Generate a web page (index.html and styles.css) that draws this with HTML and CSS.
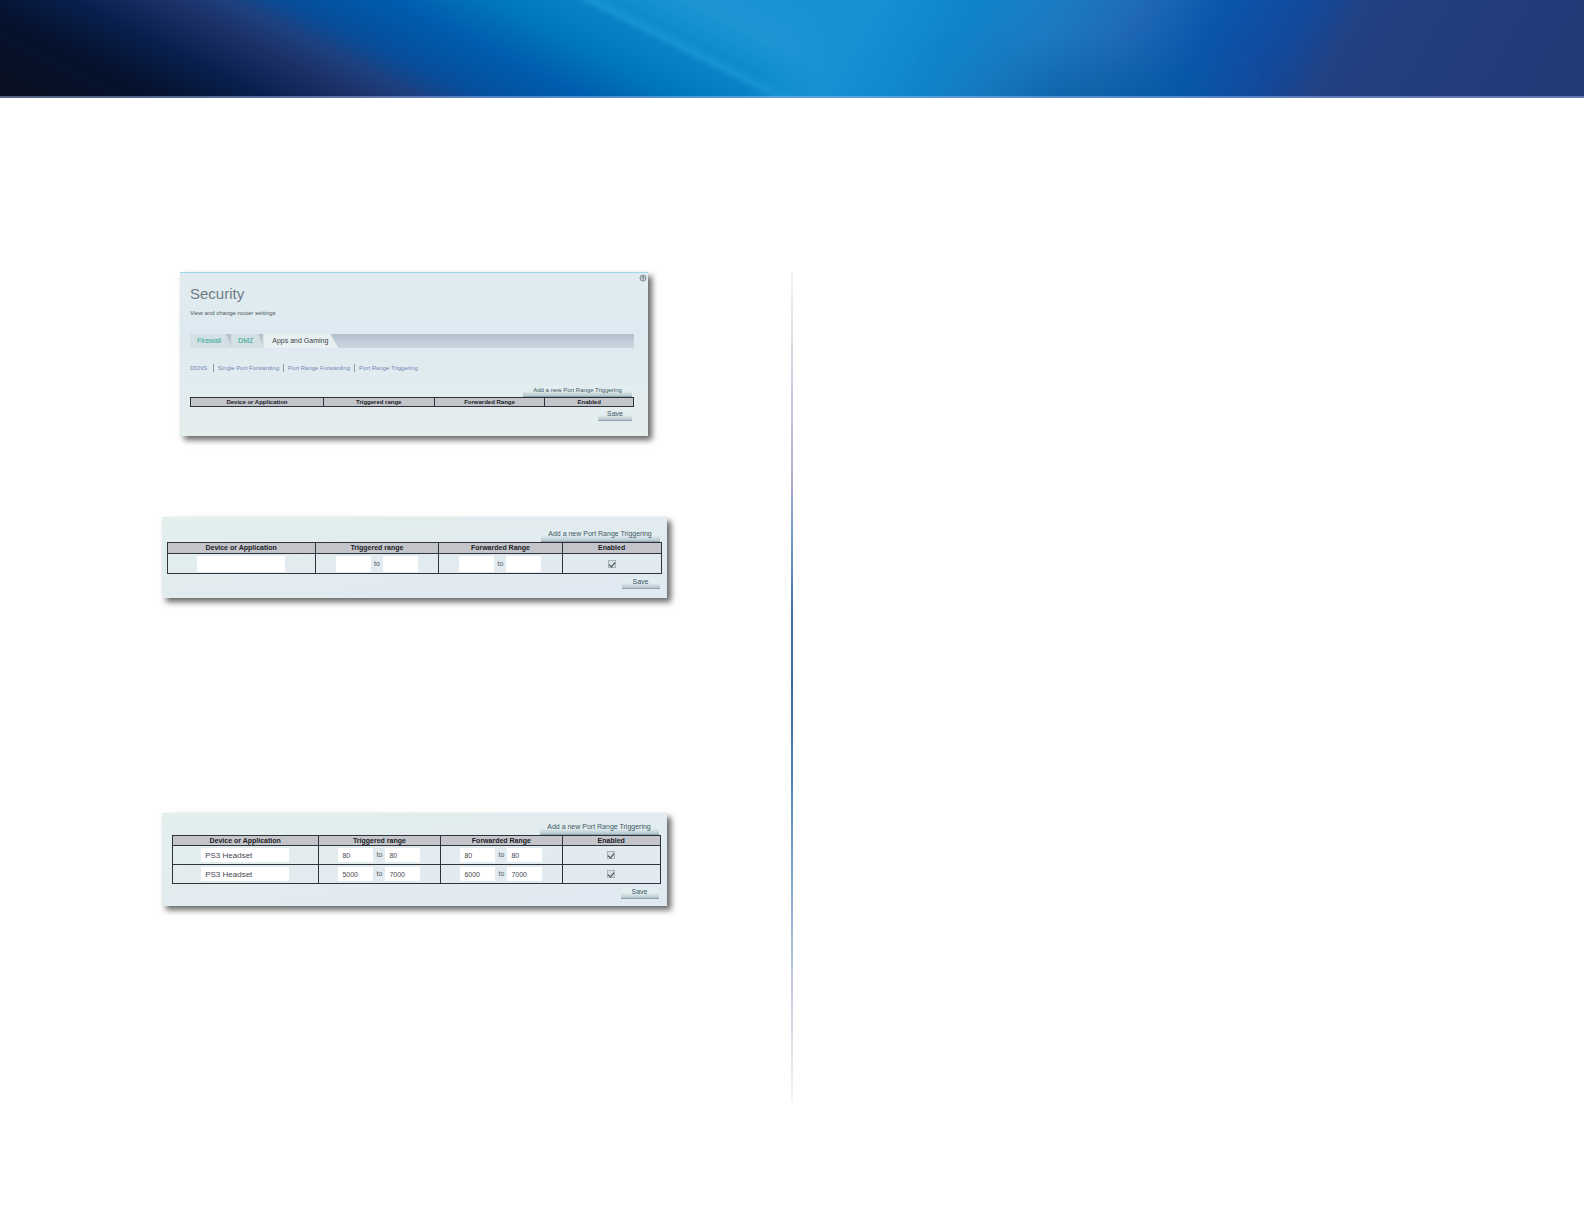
FILE: index.html
```html
<!DOCTYPE html>
<html lang="en">
<head>
  <meta charset="UTF-8">
  <meta name="viewport" content="width=device-width, initial-scale=1.0">
  <title>Port Range Triggering</title>
  <link rel="stylesheet" href="styles.css">
</head>
<body>
  <header class="banner">
    <svg viewBox="0 0 1584 98" preserveAspectRatio="none" aria-hidden="true">
      <defs>
        <linearGradient id="left" gradientUnits="userSpaceOnUse" x1="-190" y1="0" x2="810" y2="0" gradientTransform="skewX(63)">
          <stop offset="0" stop-color="#0a0f20"/>
          <stop offset=".16" stop-color="#05122e"/>
          <stop offset=".26" stop-color="#081f4c"/>
          <stop offset=".36" stop-color="#1d3168"/>
          <stop offset=".42" stop-color="#1c4180"/>
          <stop offset=".48" stop-color="#064e9c"/>
          <stop offset=".58" stop-color="#005cae"/>
          <stop offset=".68" stop-color="#0076be"/>
          <stop offset=".765" stop-color="#0a82c8"/>
          <stop offset=".78" stop-color="#1793d2"/>
          <stop offset=".80" stop-color="#0c8ccc"/>
          <stop offset=".88" stop-color="#1f95d5"/>
          <stop offset="1" stop-color="#1890d4"/>
        </linearGradient>
        <linearGradient id="right" gradientUnits="userSpaceOnUse" x1="800" y1="0" x2="1584" y2="0" gradientTransform="skewX(-30)">
          <stop offset="0" stop-color="#1890d4" stop-opacity="0"/>
          <stop offset=".1" stop-color="#1890d4"/>
          <stop offset=".22" stop-color="#0f84cb"/>
          <stop offset=".34" stop-color="#1c7ac2"/>
          <stop offset=".44" stop-color="#1f69b6"/>
          <stop offset=".55" stop-color="#0a55ac"/>
          <stop offset=".65" stop-color="#12499c"/>
          <stop offset=".73" stop-color="#224182"/>
          <stop offset="1" stop-color="#233978"/>
        </linearGradient>
        <linearGradient id="shade" x1="0" y1="0" x2="0" y2="1">
          <stop offset=".3" stop-color="#005c9c" stop-opacity="0"/>
          <stop offset="1" stop-color="#005c9c" stop-opacity=".7"/>
        </linearGradient>
        <filter id="soft" x="-50%" y="-60%" width="200%" height="220%">
          <feGaussianBlur stdDeviation="40 8"/>
        </filter>
      </defs>
      <rect width="1584" height="98" fill="url(#left)"/>
      <rect x="700" width="884" height="98" fill="url(#right)"/>
      <rect x="1000" width="200" height="120" fill="url(#shade)" filter="url(#soft)"/>
      <rect y="96" width="1584" height="2" fill="#a0b8e8" opacity=".5"/>
    </svg>
  </header>

  <main class="page">
    <div class="column">
      <section class="panel security">
        <svg class="help" viewBox="0 0 8 8" aria-hidden="true">
          <circle cx="4" cy="4" r="3" fill="#c5ced4" stroke="#7f8a92"/>
          <path d="M3 3.2Q4 2.2 5 3.1Q5 3.8 4 4.2V5.4" fill="none" stroke="#5e6a74" stroke-width=".8"/>
        </svg>
        <h1>Security</h1>
        <p>View and change router settings</p>
        <nav class="tabs">
          <a href="#firewall">Firewall</a>
          <a href="#dmz">DMZ</a>
          <a href="#apps" class="active">Apps and Gaming</a>
        </nav>
        <nav class="links">
          <a href="#ddns">DDNS</a>
          <a href="#single">Single Port Forwarding</a>
          <a href="#range">Port Range Forwarding</a>
          <a href="#trigger">Port Range Triggering</a>
        </nav>
        <button class="btn add">Add a new Port Range Triggering</button>
        <table>
          <thead>
            <tr><th class="device">Device or Application</th><th class="range">Triggered range</th><th class="range">Forwarded Range</th><th>Enabled</th></tr>
          </thead>
        </table>
        <button class="btn save">Save</button>
      </section>

      <section class="panel entry">
        <button class="btn add">Add a new Port Range Triggering</button>
        <table>
          <thead>
            <tr><th class="device">Device or Application</th><th class="range">Triggered range</th><th class="range">Forwarded Range</th><th>Enabled</th></tr>
          </thead>
          <tbody>
            <tr>
              <td><input type="text" class="name" aria-label="Device or Application"></td>
              <td><div class="ports"><input type="text" aria-label="Triggered from"><span>to</span><input type="text" aria-label="Triggered to"></div></td>
              <td><div class="ports"><input type="text" aria-label="Forwarded from"><span>to</span><input type="text" aria-label="Forwarded to"></div></td>
              <td><input type="checkbox" aria-label="Enabled" checked></td>
            </tr>
          </tbody>
        </table>
        <button class="btn save">Save</button>
      </section>

      <section class="panel filled">
        <button class="btn add">Add a new Port Range Triggering</button>
        <table>
          <thead>
            <tr><th class="device">Device or Application</th><th class="range">Triggered range</th><th class="range">Forwarded Range</th><th>Enabled</th></tr>
          </thead>
          <tbody>
            <tr>
              <td><input type="text" class="name" aria-label="Device or Application" value="PS3 Headset"></td>
              <td><div class="ports"><input type="text" aria-label="Triggered from" value="80"><span>to</span><input type="text" aria-label="Triggered to" value="80"></div></td>
              <td><div class="ports"><input type="text" aria-label="Forwarded from" value="80"><span>to</span><input type="text" aria-label="Forwarded to" value="80"></div></td>
              <td><input type="checkbox" aria-label="Enabled" checked></td>
            </tr>
            <tr>
              <td><input type="text" class="name" aria-label="Device or Application" value="PS3 Headset"></td>
              <td><div class="ports"><input type="text" aria-label="Triggered from" value="5000"><span>to</span><input type="text" aria-label="Triggered to" value="7000"></div></td>
              <td><div class="ports"><input type="text" aria-label="Forwarded from" value="6000"><span>to</span><input type="text" aria-label="Forwarded to" value="7000"></div></td>
              <td><input type="checkbox" aria-label="Enabled" checked></td>
            </tr>
          </tbody>
        </table>
        <button class="btn save">Save</button>
      </section>
    </div>
    <div class="divider"></div>
    <div class="column"></div>
  </main>
</body>
</html>
```
FILE: styles.css
```css
* {
  box-sizing: border-box;
}
body {
  margin: 0;
  background: #fff;
  color: #50565c;
  font-family: "Liberation Sans", Arial, sans-serif;
  font-size: 7px;
  line-height: 8px;
}
.banner svg {
  display: block;
  width: 100%;
  height: 98px;
}
.page {
  display: grid;
  grid-template-columns: 1fr 2px 1fr;
  column-gap: 71px;
  padding: 174px 108px 120px;
}
.column {
  display: flex;
  flex-direction: column;
  align-items: center;
}
.divider {
  min-height: 830px;
  background: linear-gradient(#f4f4f6, #d8d6e4 10%, #b9acd0 24%, #7f9fc8 30%, #3f6fae 42%, #3a6aa6 50%, #5585b8 62%, #95b4d4 78%, #d0cfe2 88%, #f4f4f6);
}

/* panels */
.panel {
  position: relative;
  display: flex;
  flex-direction: column;
  width: 100%;
  max-width: 505px;
  background: linear-gradient(170deg, #e3efed, #e2ebf0 60%, #e0e9f2);
  box-shadow: 4px 4px 6px rgba(0, 0, 0, 0.6);
}
.security {
  max-width: 468px;
  padding: 13px 14px 15px 10px;
  border-top: 1px solid #9fd6ee;
  background: linear-gradient(#e1ecf0, #deeaf1 35%, #e5eeee);
}
.entry {
  margin-top: 81px;
  padding: 13px 5px 9px;
}
.filled {
  margin-top: 215px;
  padding: 10px 6px 7px 10px;
}
.help {
  position: absolute;
  top: 1px;
  right: 1px;
  width: 8px;
  height: 8px;
}
h1 {
  margin: 0;
  color: #6e7a84;
  font-size: 15px;
  font-weight: normal;
  line-height: 16px;
}
p {
  margin: 7px 0 17px;
  font-size: 6px;
}

/* tabs */
.tabs {
  display: flex;
  height: 14px;
  background: linear-gradient(#b3c0cc, #ccd7e0);
}
.tabs a {
  padding: 0 10px 0 7px;
  background: #d3e0e4;
  clip-path: polygon(0 0, calc(100% - 5px) 0, 100% 100%, 0 100%);
  color: #2fa596;
  line-height: 14px;
  text-decoration: none;
}
.tabs .active {
  padding: 0 10px 0 9px;
  background: #e8f0f2;
  clip-path: polygon(0 0, calc(100% - 8px) 0, 100% 100%, 0 100%);
  color: #3c4248;
}
.links {
  display: flex;
  margin: 16px 0 14px;
  font-size: 6px;
}
.links a {
  padding: 0 4px;
  border-left: 1px solid #8a97b0;
  color: #7388b4;
  text-decoration: none;
}
.links a:first-child {
  padding: 0 6px 0 0;
  border-left: 0;
}

/* buttons */
.btn {
  display: flex;
  align-items: flex-start;
  justify-content: center;
  align-self: flex-end;
  height: 11px;
  margin: 0 2px;
  padding: 0;
  border: 0;
  border-bottom: 1px solid #8fa3ae;
  background: linear-gradient(#e2edf0 50%, #b4c6ce);
  color: #3d5560;
  font: 7px/8px "Liberation Sans", Arial, sans-serif;
  cursor: pointer;
}
.add {
  width: 119px;
}
.entry .add, .filled .add {
  height: 12px;
}
.save {
  width: 38px;
  margin-top: 4px;
}
.security .add {
  width: 109px;
  font-size: 6px;
}
.security .save {
  width: 34px;
  margin-top: 3px;
}

/* port tables */
table {
  width: 100%;
  border-collapse: collapse;
  table-layout: fixed;
}
th, td {
  padding: 0;
  border: 1px solid #30343a;
  text-align: center;
}
th {
  height: 11px;
  background: #c3c5ca;
  color: #202226;
  line-height: 8px;
}
.security th {
  height: 9px;
  font-size: 6px;
}
.filled th {
  height: 10px;
}
.device {
  width: 30%;
}
.range {
  width: 25%;
}
td {
  height: 20px;
}
.filled td {
  height: 19px;
}
input {
  display: block;
  margin: 0 auto;
}
input[type=text] {
  width: 35px;
  height: 16px;
  padding: 0 4px;
  border: 0;
  background: #fff;
  color: #44484e;
  font: 7px/10px "Liberation Sans", Arial, sans-serif;
}
input[type=text].name {
  width: 88px;
  font-size: 8px;
}
.filled input[type=text] {
  height: 14px;
}
.ports {
  display: flex;
  justify-content: center;
  align-items: center;
}
.ports input {
  margin: 0;
}
.ports span {
  width: 12px;
}
input[type=checkbox] {
  appearance: none;
  width: 8px;
  height: 8px;
  border: 1px solid #a9b4bc;
  background: #d6dfe4;
}
input[type=checkbox]:checked::before {
  content: "";
  display: block;
  width: 3px;
  height: 5px;
  margin: 0 auto;
  border: solid #3c444c;
  border-width: 0 1px 1px 0;
  transform: rotate(40deg);
}
```
